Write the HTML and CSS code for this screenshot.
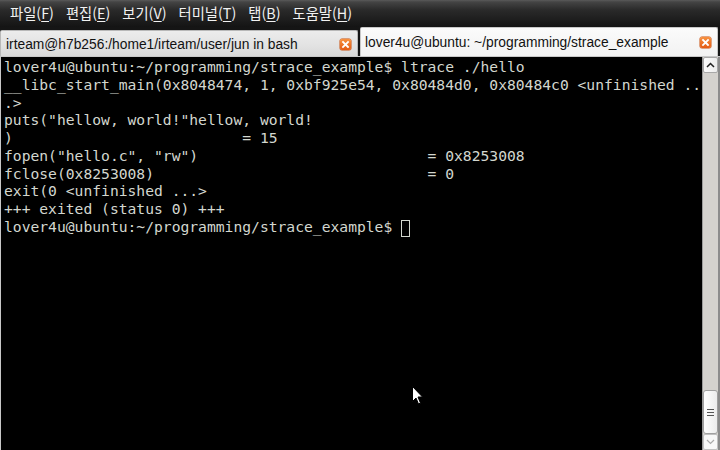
FILE: index.html
```html
<!DOCTYPE html>
<html lang="ko">
<head>
<meta charset="utf-8">
<title>Terminal</title>
<link rel="stylesheet" href="styles.css">
</head>
<body>
<div class="window">
  <div class="menubar">
    <span class="menu">파일(<u>F</u>)</span>
    <span class="menu">편집(<u>E</u>)</span>
    <span class="menu">보기(<u>V</u>)</span>
    <span class="menu">터미널(<u>T</u>)</span>
    <span class="menu">탭(<u>B</u>)</span>
    <span class="menu">도움말(<u>H</u>)</span>
  </div>
  <div class="tabbar">
    <div class="tab inactive">
      <span class="tab-title">irteam@h7b256:/home1/irteam/user/jun in bash</span>
      <span class="close"><svg width="11" height="11" viewBox="0 0 11 11"><path d="M3 3L8 8M8 3L3 8" stroke="#fff" stroke-width="1.8" stroke-linecap="square"/></svg></span>
    </div>
    <div class="tab active">
      <span class="tab-title">lover4u@ubuntu: ~/programming/strace_example</span>
      <span class="close"><svg width="11" height="11" viewBox="0 0 11 11"><path d="M3 3L8 8M8 3L3 8" stroke="#fff" stroke-width="1.8" stroke-linecap="square"/></svg></span>
    </div>
  </div>
  <div class="content">
    <div class="term">
<pre class="output">lover4u@ubuntu:~/programming/strace_example$ ltrace ./hello
__libc_start_main(0x8048474, 1, 0xbf925e54, 0x80484d0, 0x80484c0 &lt;unfinished ..
.&gt;
puts("hellow, world!"hellow, world!
)                          = 15
fopen("hello.c", "rw")                          = 0x8253008
fclose(0x8253008)                               = 0
exit(0 &lt;unfinished ...&gt;
+++ exited (status 0) +++
lover4u@ubuntu:~/programming/strace_example$ <span class="cursor"></span></pre>
      <svg class="pointer" width="12" height="19" viewBox="0 0 12 19"><path d="M0.5 0.5V15.5L4 12L6.5 18L8.5 17L6 11H10.5Z" fill="#fff" stroke="#000" stroke-width="1"/></svg>
    </div>
    <div class="scrollbar">
      <div class="sb-btn"><svg width="9" height="6" viewBox="0 0 9 6"><path d="M1 5L4.5 1.5L8 5" fill="none" stroke="#222" stroke-width="1.5"/></svg></div>
      <div class="sb-track">
        <div class="sb-thumb"><span class="grip"></span><span class="grip"></span><span class="grip"></span></div>
      </div>
      <div class="sb-btn down"><svg width="9" height="6" viewBox="0 0 9 6"><path d="M1 1L4.5 4.5L8 1" fill="none" stroke="#aaa" stroke-width="1.2"/></svg></div>
    </div>
  </div>
</div>
</body>
</html>
```
FILE: styles.css
```css
html, body {
  margin: 0;
  padding: 0;
  background: #141414;
}
.window {
  width: 720px;
  height: 450px;
  overflow: hidden;
  display: flex;
  flex-direction: column;
  background: #161616;
}
.menubar {
  height: 27px;
  flex: none;
  display: flex;
  align-items: center;
  padding-left: 10px;
  gap: 12px;
  background: linear-gradient(#5a5a5a 0px, #444 2px, #2a2a2a 10px, #141414 27px);
  font-family: "Noto Sans CJK KR", "Liberation Sans", sans-serif;
  font-size: 14.3px;
  color: #f2f2f2;
  box-sizing: border-box;
  padding-bottom: 2px;
}
.menu u {
  text-decoration-thickness: 1px;
  text-underline-offset: 2px;
}
.tabbar {
  height: 29px;
  flex: none;
  display: flex;
  align-items: flex-end;
  gap: 2px;
  background: #151515;
}
.tab {
  width: 358px;
  box-sizing: border-box;
  display: flex;
  align-items: center;
  justify-content: space-between;
  padding: 0 6px 0 5px;
  font-family: "Liberation Sans", Arial, sans-serif;
  font-size: 13.8px;
  color: #111;
  border-radius: 2px 2px 0 0;
}
.tab.inactive {
  height: 26px;
  background: linear-gradient(#ececec, #e2e2e2 60%, #d8d8d8);
  border: 1px solid #b8b8b8;
  border-bottom: none;
  padding-top: 1px;
}
.tab.active {
  height: 29px;
  background: linear-gradient(#fbfbfb, #f2f2f2);
  border: 1px solid #c8c8c8;
  border-bottom: none;
  padding-left: 4px;
  padding-right: 6px;
  padding-top: 1px;
}
.tab-title {
  white-space: nowrap;
}
.close {
  width: 11px;
  height: 11px;
  border-radius: 2px;
  background: linear-gradient(#f7913f, #e45a13);
  box-shadow: 0 0 0 0.5px #c8500f;
  display: flex;
}
.content {
  flex: 1;
  display: flex;
  min-height: 0;
  background: #c8c8c8;
  padding-top: 1px;
  padding-left: 1px;
}
.term {
  flex: 1;
  position: relative;
  background: #000;
  overflow: hidden;
}
.output {
  margin: 0;
  padding: 1px 0 0 3px;
  font-family: "DejaVu Sans Mono", monospace;
  font-size: 14.67px;
  line-height: 17.75px;
  color: #d3d7cf;
  white-space: pre;
}
.cursor {
  display: inline-block;
  width: 9px;
  height: 17px;
  box-sizing: border-box;
  border: 1px solid #d3d7cf;
  vertical-align: -5px;
}
.pointer {
  position: absolute;
  left: 411px;
  top: 329px;
}
.scrollbar {
  width: 15px;
  flex: none;
  display: flex;
  flex-direction: column;
  background: #d4d2ce;
  border-left: 1px solid #9c9c9c;
  border-right: 2px solid #8c8c8c;
}
.sb-btn {
  height: 16px;
  flex: none;
  display: flex;
  align-items: center;
  justify-content: center;
  background: linear-gradient(90deg, #fdfdfd, #ececec);
  border: 1px solid #a8a8a8;
  border-radius: 2px;
  box-sizing: border-box;
}
.sb-btn.down {
  background: #f8f8f8;
  border-color: #c0c0c0;
}
.sb-track {
  flex: 1;
  display: flex;
  flex-direction: column;
  justify-content: flex-end;
}
.sb-thumb {
  height: 44px;
  box-sizing: border-box;
  border: 1px solid #a0a0a0;
  border-radius: 3px;
  background: linear-gradient(90deg, #ffffff, #ececec);
  display: flex;
  flex-direction: column;
  align-items: center;
  justify-content: center;
  gap: 2px;
}
.grip {
  width: 7px;
  height: 1px;
  background: #555;
}
```
